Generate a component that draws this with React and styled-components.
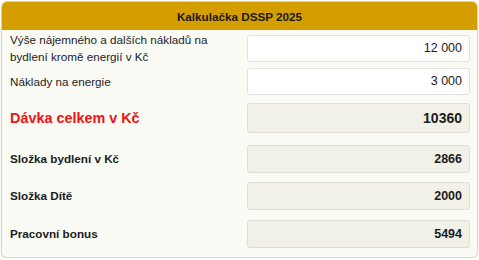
import React from "react";
import styled, { createGlobalStyle } from "styled-components";

const Global = createGlobalStyle`
  html, body { margin: 0; padding: 0; background: #ffffff; }
  body { font-family: "Liberation Sans", Arial, sans-serif; }
`;

const Card = styled.div`
  box-sizing: border-box;
  margin: 1px 0 0 1px;
  width: 477px;
  height: 257px;
  background: #fbfbf6;
  border: 1px solid #e4d5a6;
  border-radius: 6px;
  box-shadow: 0 1px 2px rgba(120, 100, 40, 0.12);
  overflow: hidden;
`;

const Header = styled.div`
  height: 28px;
  background: #d49e00;
  display: flex;
  align-items: center;
  justify-content: center;
  font-weight: bold;
  font-size: 11.7px;
  color: #1a1a1a;
`;

const Form = styled.div`
  display: grid;
  grid-template-columns: 227px 223px;
  grid-template-rows: 36px 30px 44px 37px 37px 39px;
  column-gap: 10px;
  align-items: center;
  padding: 0 6px 0 8px;
`;

const Label = styled.div`
  font-size: ${(p) => (p.$total ? "14.4px" : "11.7px")};
  font-weight: ${(p) => (p.$bold || p.$total ? "bold" : "normal")};
  color: ${(p) => (p.$total ? "#ee1414" : "#1c1c1c")};
  line-height: 17px;
`;

const Input = styled.input`
  box-sizing: border-box;
  width: 100%;
  height: 27px;
  margin: 0;
  padding: 0 7px;
  border: 1px solid #e2e2e0;
  border-radius: 3px;
  background: #ffffff;
  text-align: right;
  font-family: "Liberation Sans", Arial, sans-serif;
  font-size: 12.5px;
  color: #1c1c1c;
  outline: none;
`;

const Output = styled.div`
  box-sizing: border-box;
  height: ${(p) => (p.$total ? "30px" : "28px")};
  padding: 0 7px;
  border: 1px solid #deded4;
  border-radius: 3px;
  background: #f1f1e7;
  display: flex;
  align-items: center;
  justify-content: flex-end;
  font-weight: bold;
  font-size: ${(p) => (p.$total ? "14px" : "12.5px")};
  color: #1c1c1c;
`;

export default function App() {
  return (
    <>
      <Global />
      <Card>
        <Header>Kalkulačka DSSP 2025</Header>
        <Form>
          <Label>
            Výše nájemného a dalších nákladů na
            <br />
            bydlení kromě energií v Kč
          </Label>
          <Input defaultValue="12 000" />
          <Label>Náklady na energie</Label>
          <Input defaultValue="3 000" />
          <Label $total>Dávka celkem v Kč</Label>
          <Output $total>10360</Output>
          <Label $bold>Složka bydlení v Kč</Label>
          <Output>2866</Output>
          <Label $bold>Složka Dítě</Label>
          <Output>2000</Output>
          <Label $bold>Pracovní bonus</Label>
          <Output>5494</Output>
        </Form>
      </Card>
    </>
  );
}
